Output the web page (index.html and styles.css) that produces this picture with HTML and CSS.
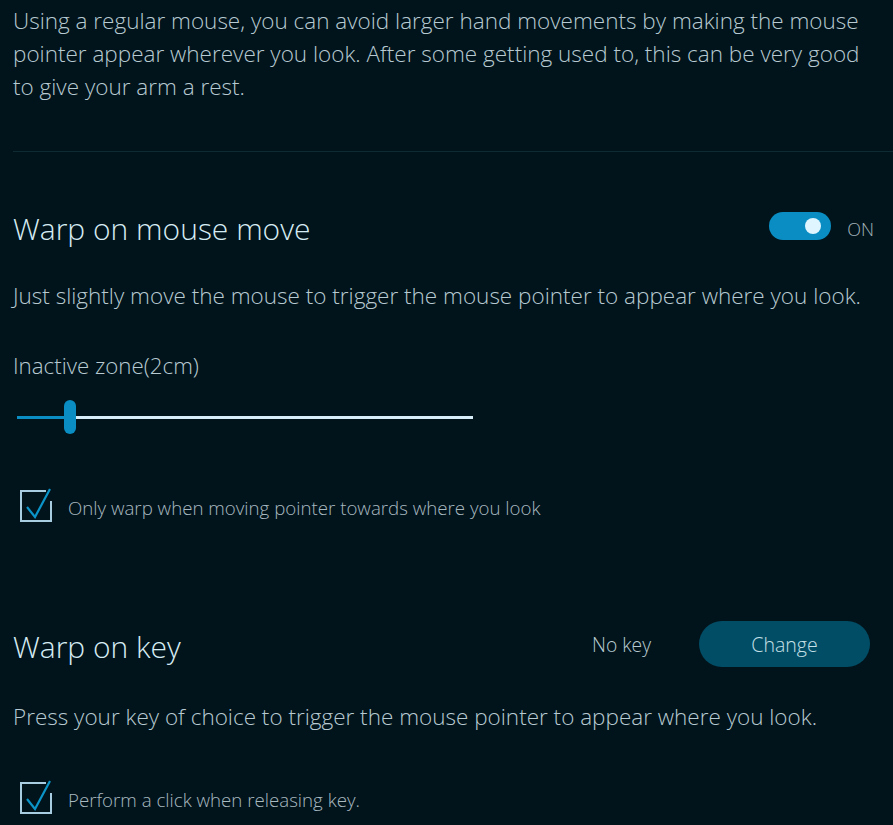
FILE: index.html
```html
<!DOCTYPE html>
<html>
<head>
<meta charset="utf-8">
<link rel="stylesheet" href="styles.css">
</head>
<body>
<div class="page">
  <p class="intro">Using a regular mouse, you can avoid larger hand movements by making the mouse pointer appear wherever you look. After some getting used to, this can be very good to give your arm a rest.</p>
  <div class="divider"></div>

  <section class="section first">
    <div class="head-row">
      <h2 class="title">Warp on mouse move</h2>
      <div class="toggle-wrap">
        <div class="toggle"><div class="knob"></div></div>
        <span class="toggle-label">ON</span>
      </div>
    </div>
    <p class="desc">Just slightly move the mouse to trigger the mouse pointer to appear where you look.</p>
    <div class="label">Inactive zone(2cm)</div>
    <div class="slider">
      <div class="track"><div class="fill" style="width: 50px"></div></div>
      <div class="thumb" style="left: 47px"></div>
    </div>
    <div class="check-row">
      <svg class="check" width="34" height="34" viewBox="0 0 34 34">
        <path d="M27 3 H2 V33 H32 V13" fill="none" stroke="#a9cde0" stroke-width="2"/>
        <path d="M8 19 L16 29 L31 1" fill="none" stroke="#0a94c8" stroke-width="2.2"/>
      </svg>
      <span class="check-text">Only warp when moving pointer towards where you look</span>
    </div>
  </section>

  <section class="section second">
    <div class="head-row">
      <h2 class="title">Warp on key</h2>
      <div class="key-wrap">
        <span class="key-name">No key</span>
        <button class="btn">Change</button>
      </div>
    </div>
    <p class="desc desc2">Press your key of choice to trigger the mouse pointer to appear where you look.</p>
    <div class="check-row row2">
      <svg class="check" width="34" height="34" viewBox="0 0 34 34">
        <path d="M27 3 H2 V33 H32 V13" fill="none" stroke="#a9cde0" stroke-width="2"/>
        <path d="M8 19 L16 29 L31 1" fill="none" stroke="#0a94c8" stroke-width="2.2"/>
      </svg>
      <span class="check-text">Perform a click when releasing key.</span>
    </div>
  </section>
</div>
</body>
</html>
```
FILE: styles.css
```css
html, body {
  margin: 0;
  padding: 0;
  background: #02141b;
  height: 100%;
  overflow: hidden;
}
body {
  font-family: "Open Sans", "Noto Sans", sans-serif;
  font-weight: 300;
  color: #b7cad2;
}
.page {
  padding: 4px 0 0 13px;
}
.intro {
  margin: 0;
  font-size: 22.5px;
  line-height: 33px;
  width: 870px;
}
.divider {
  height: 1px;
  background: #0e2a33;
  margin-top: 48px;
}
.section.first {
  padding-top: 54px;
}
.head-row {
  display: flex;
  align-items: center;
  justify-content: space-between;
  width: 857px;
  height: 44px;
}
.title {
  margin: 0;
  font-size: 30px;
  font-weight: 300;
  color: #d6ecf4;
}
.toggle-wrap {
  display: flex;
  align-items: center;
  gap: 16px;
  margin-top: -4px;
  margin-right: -4px;
}
.toggle {
  width: 62px;
  height: 28px;
  border-radius: 14px;
  background: #0a8dc2;
  position: relative;
}
.knob {
  position: absolute;
  width: 16px;
  height: 16px;
  border-radius: 50%;
  background: #dff5ff;
  top: 6px;
  right: 10px;
}
.toggle-label {
  font-size: 18px;
  color: #a4b4bb;
  padding-top: 5px;
}
.desc {
  margin: 0;
  margin-top: 29px;
  font-size: 22.5px;
  line-height: 33px;
}
.label {
  margin-top: 39px;
  font-size: 22.3px;
  line-height: 30px;
}
.slider {
  position: relative;
  width: 456px;
  height: 34px;
  margin-top: 19px;
  margin-left: 4px;
}
.track {
  position: absolute;
  left: 0;
  right: 0;
  top: 16px;
  height: 3px;
  background: #d7eef8;
}
.fill {
  height: 3px;
  background: #0a8dc2;
}
.thumb {
  position: absolute;
  top: 0;
  width: 12px;
  height: 34px;
  border-radius: 6px;
  background: #0a8dc2;
}
.check-row {
  display: flex;
  align-items: center;
  gap: 15px;
  margin-top: 54px;
  margin-left: 6px;
}
.check {
  display: block;
}
.check-text {
  font-size: 18.7px;
  color: #a8b9c0;
  margin-top: 4px;
}
.section.second {
  padding-top: 102px;
}
.key-wrap {
  display: flex;
  align-items: center;
  gap: 48px;
  margin-top: -4px;
}
.key-name {
  font-size: 19.3px;
  color: #b7cad2;
}
.btn {
  width: 171px;
  height: 46px;
  border: none;
  border-radius: 23px;
  background: #024d66;
  color: #c6e0e8;
  font-family: "Open Sans", "Noto Sans", sans-serif;
  font-weight: 300;
  font-size: 19.5px;
  padding: 0;
}
.desc2 {
  margin-top: 32px;
}
.check-row.row2 {
  margin-top: 47px;
}
```
